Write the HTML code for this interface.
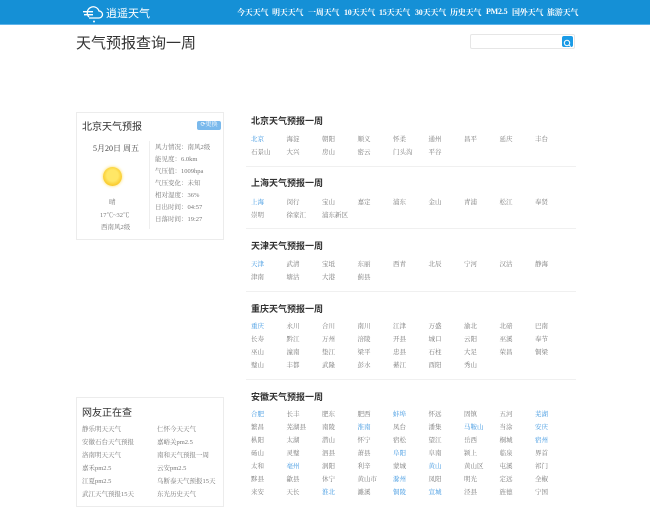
<!DOCTYPE html>
<html><head><meta charset="utf-8"><style>
*{margin:0;padding:0;box-sizing:border-box}
body{width:650px;height:500px;overflow:hidden;background:#fff;font-family:"Liberation Serif","Noto Serif CJK SC",serif;color:#666;position:relative}
.hd{position:absolute;left:0;top:0;width:650px;height:25px;background:#1590d6;border-bottom:1px solid #5fb4ea}
.nav{position:absolute;top:7px;font-size:8px;font-weight:bold;color:#fff;font-family:"Liberation Serif","Noto Serif CJK SC",serif;letter-spacing:-0.2px}
.logo{position:absolute;left:106px;top:5px;color:#fff;font-size:11px;font-family:"Liberation Sans","Noto Sans CJK SC",sans-serif}
h1{position:absolute;left:76px;top:32px;font-size:15px;font-weight:normal;color:#333;font-family:"Liberation Sans","Noto Sans CJK SC",sans-serif}
.search{position:absolute;left:470px;top:34px;width:105px;height:15px;border:1px solid #e6e6e6;border-radius:2px}
.sbtn{position:absolute;right:1px;top:1px;width:11px;height:11px;background:#1a9be6;border-radius:2px}
.card{position:absolute;left:76px;border:1px solid #ececec;background:#fff}
.sec{position:absolute;left:246px;width:330px}
.sec h3{position:absolute;left:5px;font-size:9px;color:#333;font-family:"Liberation Sans","Noto Sans CJK SC",sans-serif}
.grid{position:absolute;left:5px;display:grid;grid-template-columns:repeat(9,35.5px);grid-auto-rows:13px;font-size:6.5px;color:#777;line-height:13px;white-space:nowrap}
.b{color:#3a95e0}
.line{position:absolute;left:246px;width:330px;height:1px;background:#f0f0f0}
.sm{font-size:6.5px;color:#777;position:absolute;white-space:nowrap}
</style></head><body>
<div class="hd">
<svg style="position:absolute;left:82px;top:3px" width="24" height="20" viewBox="0 0 24 20"><path d="M7 14 A6 6 0 1 1 17 8 A3.5 3.5 0 0 1 17 15 H7" fill="none" stroke="#fff" stroke-width="1.3"/><rect x="1" y="8" width="10" height="1.4" fill="#fff"/><rect x="2" y="11" width="9" height="1.4" fill="#fff"/><circle cx="12" cy="18.5" r="1" fill="#fff"/></svg>
<div class="logo">逍遥天气</div>
<span class="nav" style="left:237px">今天天气</span>
<span class="nav" style="left:272px">明天天气</span>
<span class="nav" style="left:308px">一周天气</span>
<span class="nav" style="left:344px">10天天气</span>
<span class="nav" style="left:379px">15天天气</span>
<span class="nav" style="left:415px">30天天气</span>
<span class="nav" style="left:450px">历史天气</span>
<span class="nav" style="left:486px">PM2.5</span>
<span class="nav" style="left:512px">国外天气</span>
<span class="nav" style="left:547px">旅游天气</span>
</div>
<h1>天气预报查询一周</h1>
<div class="search"><div class="sbtn"><svg width="11" height="11" viewBox="0 0 11 11"><circle cx="5" cy="5" r="2.7" fill="none" stroke="#fff" stroke-width="1"/><path d="M7 7 L8.7 8.7" stroke="#fff" stroke-width="1"/></svg></div></div>

<div class="card" style="top:112px;width:148px;height:128px">
<div style="position:absolute;left:5px;top:5px;font-size:10px;color:#333;font-family:'Liberation Sans','Noto Sans CJK SC',sans-serif">北京天气预报</div>
<div style="position:absolute;left:120px;top:8px;width:24px;height:9px;background:#7ab9ec;border-radius:2px;color:#fff;font-size:6px;line-height:9px;text-align:center">⟳更换</div>
<div style="position:absolute;left:16px;top:30px;font-size:8px;color:#444">5月20日 周五</div>
<div style="position:absolute;left:26px;top:54px;width:19px;height:19px;border-radius:50%;background:radial-gradient(circle at 50% 45%,#ffe766 40%,#f8c21a 80%);box-shadow:0 0 3px #fcdc60"></div>
<span class="sm" style="left:32px;top:84px">晴</span>
<span class="sm" style="left:23px;top:97px">17℃~32℃</span>
<span class="sm" style="left:24px;top:109px">西南风2级</span>
<div style="position:absolute;left:72px;top:28px;width:1px;height:88px;background:#eee"></div>
<span class="sm" style="left:78px;top:29px">风力情况：南风2级</span>
<span class="sm" style="left:78px;top:41px">能见度：6.0km</span>
<span class="sm" style="left:78px;top:53px">气压值：1009hpa</span>
<span class="sm" style="left:78px;top:65px">气压变化：未知</span>
<span class="sm" style="left:78px;top:77px">相对湿度：36%</span>
<span class="sm" style="left:78px;top:89px">日出时间：04:57</span>
<span class="sm" style="left:78px;top:101px">日落时间：19:27</span>
</div>

<div class="card" style="top:397px;width:148px;height:110px">
<div style="position:absolute;left:5px;top:6px;font-size:10px;color:#333;font-family:'Liberation Sans','Noto Sans CJK SC',sans-serif">网友正在查</div>
<span class="sm" style="left:5px;top:26px">静乐明天天气</span><span class="sm" style="left:80px;top:26px">仁怀今天天气</span>
<span class="sm" style="left:5px;top:39px">安徽石台天气预报</span><span class="sm" style="left:80px;top:39px">嘉峪关pm2.5</span>
<span class="sm" style="left:5px;top:52px">洛南明天天气</span><span class="sm" style="left:80px;top:52px">南和天气预报一周</span>
<span class="sm" style="left:5px;top:65px">嘉禾pm2.5</span><span class="sm" style="left:80px;top:65px">云安pm2.5</span>
<span class="sm" style="left:5px;top:78px">江夏pm2.5</span><span class="sm" style="left:80px;top:78px">乌断泰天气预报15天</span>
<span class="sm" style="left:5px;top:91px">武江天气预报15天</span><span class="sm" style="left:80px;top:91px">东光历史天气</span>
</div>

<div class="sec" style="top:0"><h3 style="top:114px">北京天气预报一周</h3>
<div class="grid" style="top:133px"><span class="b">北京</span><span>海淀</span><span>朝阳</span><span>顺义</span><span>怀柔</span><span>通州</span><span>昌平</span><span>延庆</span><span>丰台</span><span>石景山</span><span>大兴</span><span>房山</span><span>密云</span><span>门头沟</span><span>平谷</span></div></div>
<div class="line" style="top:166px"></div>
<div class="sec" style="top:0"><h3 style="top:176px">上海天气预报一周</h3>
<div class="grid" style="top:196px"><span class="b">上海</span><span>闵行</span><span>宝山</span><span>嘉定</span><span>浦东</span><span>金山</span><span>青浦</span><span>松江</span><span>奉贤</span><span>崇明</span><span>徐家汇</span><span>浦东新区</span></div></div>
<div class="line" style="top:228px"></div>
<div class="sec" style="top:0"><h3 style="top:239px">天津天气预报一周</h3>
<div class="grid" style="top:258px"><span class="b">天津</span><span>武清</span><span>宝坻</span><span>东丽</span><span>西青</span><span>北辰</span><span>宁河</span><span>汉沽</span><span>静海</span><span>津南</span><span>塘沽</span><span>大港</span><span>蓟县</span></div></div>
<div class="line" style="top:291px"></div>
<div class="sec" style="top:0"><h3 style="top:302px">重庆天气预报一周</h3>
<div class="grid" style="top:320px"><span class="b">重庆</span><span>永川</span><span>合川</span><span>南川</span><span>江津</span><span>万盛</span><span>渝北</span><span>北碚</span><span>巴南</span><span>长寿</span><span>黔江</span><span>万州</span><span>涪陵</span><span>开县</span><span>城口</span><span>云阳</span><span>巫溪</span><span>奉节</span><span>巫山</span><span>潼南</span><span>垫江</span><span>梁平</span><span>忠县</span><span>石柱</span><span>大足</span><span>荣昌</span><span>铜梁</span><span>璧山</span><span>丰都</span><span>武隆</span><span>彭水</span><span>綦江</span><span>酉阳</span><span>秀山</span></div></div>
<div class="line" style="top:379px"></div>
<div class="sec" style="top:0"><h3 style="top:390px">安徽天气预报一周</h3>
<div class="grid" style="top:408px"><span class="b">合肥</span><span>长丰</span><span>肥东</span><span>肥西</span><span class="b">蚌埠</span><span>怀远</span><span>固镇</span><span>五河</span><span class="b">芜湖</span><span>繁昌</span><span>芜湖县</span><span>南陵</span><span class="b">淮南</span><span>凤台</span><span>潘集</span><span class="b">马鞍山</span><span>当涂</span><span class="b">安庆</span><span>枞阳</span><span>太湖</span><span>潜山</span><span>怀宁</span><span>宿松</span><span>望江</span><span>岳西</span><span>桐城</span><span class="b">宿州</span><span>砀山</span><span>灵璧</span><span>泗县</span><span>萧县</span><span class="b">阜阳</span><span>阜南</span><span>颍上</span><span>临泉</span><span>界首</span><span>太和</span><span class="b">亳州</span><span>涡阳</span><span>利辛</span><span>蒙城</span><span class="b">黄山</span><span>黄山区</span><span>屯溪</span><span>祁门</span><span>黟县</span><span>歙县</span><span>休宁</span><span>黄山市</span><span class="b">滁州</span><span>凤阳</span><span>明光</span><span>定远</span><span>全椒</span><span>来安</span><span>天长</span><span class="b">淮北</span><span>濉溪</span><span class="b">铜陵</span><span class="b">宣城</span><span>泾县</span><span>旌德</span><span>宁国</span></div></div>
</body></html>
